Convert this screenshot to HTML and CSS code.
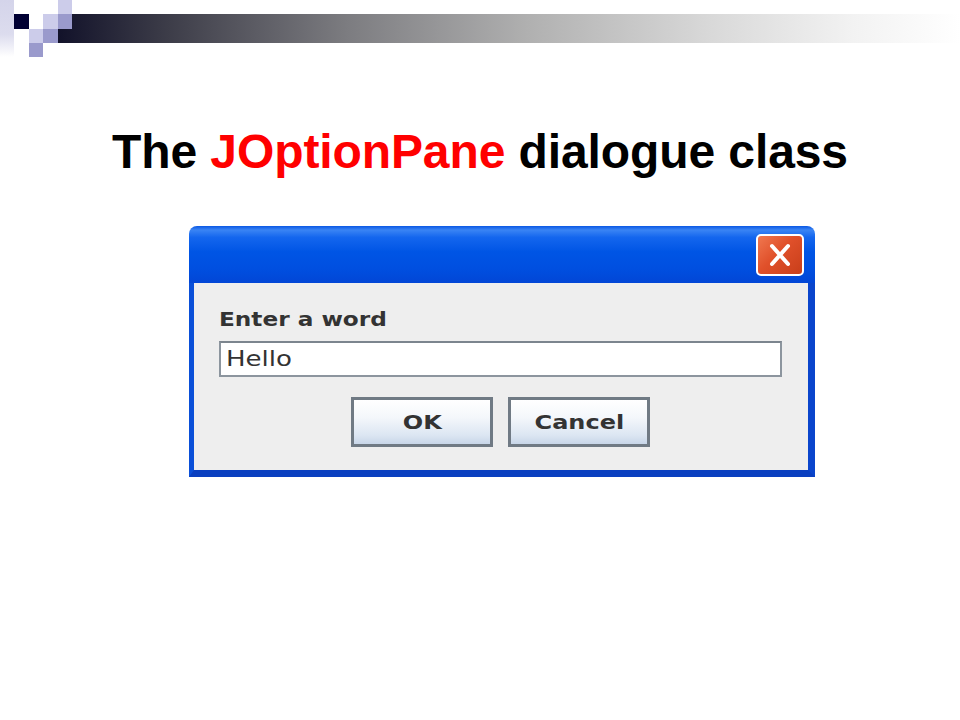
FILE: index.html
```html
<!DOCTYPE html>
<html>
<head>
<meta charset="utf-8">
<link rel="stylesheet" href="styles.css">
</head>
<body>
<div class="slide">
  <div class="decor">
    <div class="strip"></div>
    <div class="bar"></div>
    <div class="sq navy c2r2"></div>
    <div class="sq light c4r2"></div>
    <div class="sq light c5r1"></div>
    <div class="sq mid c5r2"></div>
    <div class="sq light c3r3"></div>
    <div class="sq mid c4r3"></div>
    <div class="sq mid c3r4"></div>
  </div>
  <h1 class="title">The <span class="red">JOptionPane</span> dialogue class</h1>
  <div class="dialog">
    <div class="titlebar">
      <div class="close">
        <svg width="34" height="30" viewBox="0 0 34 30"><path d="M9 6 L25 24 M25 6 L9 24" stroke="#fff" stroke-width="4" stroke-linecap="round"/></svg>
      </div>
    </div>
    <div class="body">
      <div class="label"><span class="wide">Enter a word</span></div>
      <div class="field"><span class="wide hello">Hello</span></div>
      <div class="buttons">
        <div class="btn"><span class="wide btxt">OK</span></div>
        <div class="btn"><span class="wide btxt">Cancel</span></div>
      </div>
    </div>
  </div>
</div>
</body>
</html>
```

FILE: styles.css
```css
html, body {
  margin: 0;
  padding: 0;
  background: #fff;
}
.slide {
  width: 960px;
  height: 720px;
  background: #fff;
  display: flex;
  flex-direction: column;
  align-items: center;
}
.decor {
  align-self: stretch;
  display: grid;
  grid-template-columns: 14px 15px 14px 15px 14px 1fr;
  grid-template-rows: 14px 15px 14px 14px;
  height: 57px;
}
.strip {
  grid-column: 1 / 2;
  grid-row: 1 / 5;
  background: linear-gradient(to bottom, #d4d4ea 0%, #dcdcee 60%, #ffffff 100%);
}
.bar {
  grid-column: 5 / 7;
  grid-row: 2 / 4;
  background: linear-gradient(to right, #12122a 0%, #3c3c48 12%, #7c7c80 32%, #b0b0b0 52%, #d8d8d8 72%, #f2f2f2 88%, #ffffff 100%);
}
.navy { background: #000033; }
.light { background: #ccccea; }
.mid { background: #9a9acc; }
.c2r2 { grid-column: 2; grid-row: 2; }
.c4r2 { grid-column: 4; grid-row: 2; }
.c5r1 { grid-column: 5; grid-row: 1; }
.c5r2 { grid-column: 5; grid-row: 2; }
.c3r3 { grid-column: 3; grid-row: 3; }
.c4r3 { grid-column: 4; grid-row: 3; }
.c3r4 { grid-column: 3; grid-row: 4; }

.title {
  margin: 67px 0 0 0;
  font-family: "Liberation Sans", Arial, sans-serif;
  font-weight: bold;
  font-size: 48px;
  line-height: 56px;
  color: #000;
  letter-spacing: -0.1px;
}
.red { color: #ff0000; }

.dialog {
  margin-top: 46px;
  margin-left: 44px;
  width: 626px;
  height: 251px;
  display: flex;
  flex-direction: column;
}
.titlebar {
  height: 57px;
  border-radius: 8px 8px 0 0;
  background: linear-gradient(to bottom, #0a58e4 0%, #3a84f4 7%, #1466ee 20%, #0055e5 45%, #004fe0 75%, #0246d6 100%);
  display: flex;
  justify-content: flex-end;
  align-items: center;
  padding-right: 11px;
}
.close {
  width: 44px;
  height: 38px;
  border: 2px solid #fff;
  border-radius: 5px;
  background: linear-gradient(135deg, #f07850 0%, #e0502a 45%, #c83e1a 100%);
  display: flex;
  align-items: center;
  justify-content: center;
  margin-top: 1px;
}
.close svg { display: block; }
.body {
  flex: 1;
  background: #eeeeee;
  border-left: 5px solid #0a4fd8;
  border-right: 7px solid #0a45cc;
  border-bottom: 7px solid #0a3fc0;
  padding: 22px 26px 0 25px;
  display: flex;
  flex-direction: column;
}
.wide {
  display: inline-block;
  transform-origin: left center;
}
.label {
  font-family: "DejaVu Sans", Tahoma, sans-serif;
  font-weight: bold;
  font-size: 20px;
  color: #333;
  line-height: 28px;
}
.label .wide { transform: scaleX(1.16); }
.field {
  margin-top: 8px;
  height: 32px;
  background: #fff;
  border: 2px solid #8c959e;
  border-top-color: #7c858e;
  font-family: "DejaVu Sans", Tahoma, sans-serif;
  font-size: 21px;
  color: #333;
  line-height: 32px;
  padding-left: 5px;
}
.hello { transform: scaleX(1.24); }
.buttons {
  margin-top: 20px;
  display: flex;
  justify-content: center;
  gap: 15px;
}
.btn {
  width: 136px;
  height: 44px;
  border: 3px solid #707a84;
  background: linear-gradient(to bottom, #ffffff 0%, #f4f7fb 40%, #dce6f2 80%, #c8d6e8 100%);
  font-family: "DejaVu Sans", Tahoma, sans-serif;
  font-weight: bold;
  font-size: 20px;
  color: #333;
  display: flex;
  align-items: center;
  justify-content: center;
}
.btxt {
  transform-origin: center center;
  transform: scaleX(1.2);
}
```
